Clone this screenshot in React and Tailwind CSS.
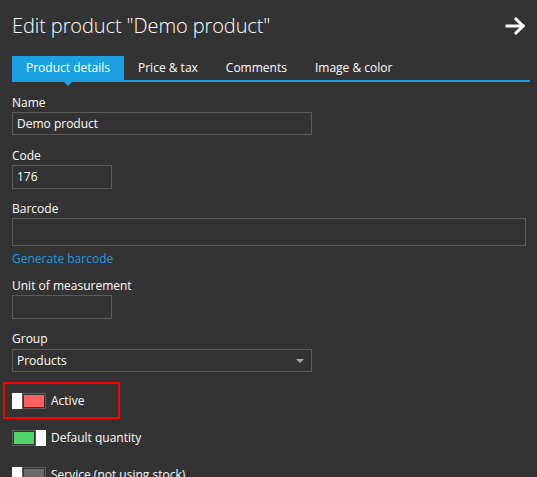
import React from 'react';

const tabs = ['Product details', 'Price & tax', 'Comments', 'Image & color'];

function Toggle({ on, color }) {
  const track = (
    <div className="flex-1 border border-[#5c5c5c] p-px bg-[#333]">
      <div className={`h-full ${color}`} />
    </div>
  );
  const thumb = <div className="w-[10px] h-full bg-white" />;
  return (
    <div className="flex h-[16px] w-[34px] shrink-0">
      {on ? track : thumb}
      {on ? thumb : track}
    </div>
  );
}

function Field({ label, className, children }) {
  return (
    <div className={className}>
      <label className="block text-[12px] leading-[17px] text-white">{label}</label>
      {children}
    </div>
  );
}

export default function App() {
  return (
    <div
      className="w-[537px] h-[477px] overflow-hidden bg-[#333333] text-white"
      style={{ fontFamily: '"Open Sans", "Segoe UI", sans-serif' }}
    >
      {/* Header */}
      <div className="flex items-center justify-between pl-3 pr-[10px] h-[56px] pb-[4px]">
        <h1 className="text-[20px] font-light leading-[30px] tracking-[-0.1px]">Edit product "Demo product"</h1>
        <svg width="22" height="20" viewBox="0 0 22 20" fill="none" stroke="white" strokeWidth="3" strokeLinecap="square">
          <path d="M2 10h16" />
          <path d="M11 3l7 7-7 7" />
        </svg>
      </div>

      {/* Tabs */}
      <div className="mx-3 flex border-b-2 border-[#1ba1e2] w-[518px]">
        {tabs.map((tab, i) => (
          <div
            key={tab}
            className={`relative px-[14px] h-[24px] leading-[24px] text-[12px] ${
              i === 0 ? 'bg-[#1ba1e2] text-white' : 'text-white'
            }`}
          >
            {tab}
            {i === 0 && (
              <span className="absolute left-1/2 -translate-x-1/2 top-[26px] w-0 h-0 border-l-4 border-r-4 border-t-4 border-l-transparent border-r-transparent border-t-[#1ba1e2]" />
            )}
          </div>
        ))}
      </div>

      {/* Form */}
      <div className="px-3">
        <Field label="Name" className="mt-[12px]">
          <div className="mt-px w-[300px] h-[23px] border border-[#5c5c58] px-[4px] text-[12px] leading-[21px]">Demo product</div>
        </Field>
        <Field label="Code" className="mt-3">
          <div className="mt-px w-[100px] h-[24px] border border-[#5c5c58] px-[4px] text-[12px] leading-[22px]">176</div>
        </Field>
        <Field label="Barcode" className="mt-[11px]">
          <div className="mt-px w-[514px] h-[28px] border border-[#5c5c58]" />
        </Field>
        <div className="mt-[4px] text-[12px] leading-[17px] text-[#1e9be0]">Generate barcode</div>
        <Field label="Unit of measurement" className="mt-[10px]">
          <div className="mt-px w-[100px] h-[24px] border border-[#5c5c58]" />
        </Field>
        <Field label="Group" className="mt-[11px]">
          <div className="mt-[2px] w-[300px] h-[23px] border border-[#5c5c58] pl-[4px] pr-[7px] flex items-center justify-between text-[12px]">
            <span>Products</span>
            <span className="w-0 h-0 border-l-4 border-r-4 border-t-4 border-l-transparent border-r-transparent border-t-[#aaaaaa]" />
          </div>
        </Field>

        <div className="mt-[10px]">
          <div className="relative flex items-center h-[37px] gap-[5px]">
            <Toggle on={false} color="bg-[#ff5f5f]" />
            <span className="text-[12px]">Active</span>
            <div className="absolute left-[-9px] top-0 w-[117px] h-[37px] border-2 border-[#ff0000]" />
          </div>
          <div className="flex items-center h-[37px] gap-[5px]">
            <Toggle on color="bg-[#50d26a]" />
            <span className="text-[12px]">Default quantity</span>
          </div>
          <div className="flex items-center h-[37px] gap-[5px]">
            <Toggle on={false} color="bg-[#6b6b6b]" />
            <span className="text-[12px]">Service (not using stock)</span>
          </div>
        </div>
      </div>
    </div>
  );
}
